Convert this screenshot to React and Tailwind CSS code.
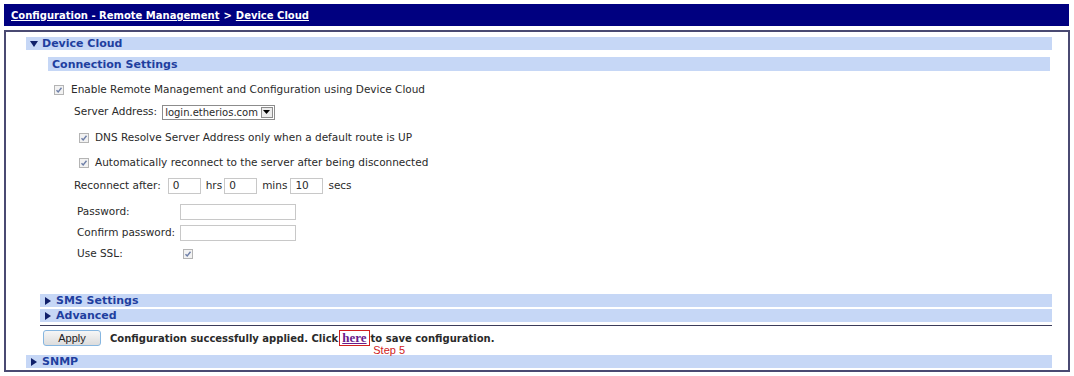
const Check = ({ className = "" }) => (
  <span
    className={`inline-flex items-center justify-center w-[10px] h-[10px] border border-[#b4b4b4] bg-[#f2f2f2] ${className}`}
  >
    <svg width="8" height="8" viewBox="0 0 8 8">
      <path d="M1.5 4.2 L3.2 6 L6.5 1.8" fill="none" stroke="#6e7fa8" strokeWidth="1.4" />
    </svg>
  </span>
);

const Bar = ({ arrow, label, className = "" }) => (
  <div
    className={`flex items-center h-[13px] bg-[#c6d7f6] text-[#1f3f9f] font-bold text-[11px] leading-none pl-[4px] whitespace-nowrap ${className}`}
  >
    {arrow === "down" && (
      <svg width="8" height="6" viewBox="0 0 8 6" className="mr-[4px]">
        <path d="M0 0 H8 L4 6 Z" fill="#10206a" />
      </svg>
    )}
    {arrow === "right" && (
      <svg width="6" height="8" viewBox="0 0 6 8" className="mr-[5px] ml-[1px]">
        <path d="M0 0 L6 4 L0 8 Z" fill="#10206a" />
      </svg>
    )}
    {label}
  </div>
);

const TextBox = ({ value = "", className = "" }) => (
  <span
    className={`inline-flex items-center h-[16px] border border-[#c8c8c8] bg-white px-[4px] text-[10.5px] ${className}`}
  >
    {value}
  </span>
);

export default function App() {
  return (
    <div
      className="w-[1074px] h-[376px] bg-white pt-[4px] pl-[4px] text-[#2a2a2a] text-[10.5px]"
      style={{ fontFamily: '"DejaVu Sans", Verdana, sans-serif' }}
    >
      {/* header */}
      <div className="w-[1065px] h-[22px] bg-[#000080] flex items-center pl-[7px] text-white font-bold text-[10px] whitespace-nowrap">
        <span className="underline">Configuration - Remote Management</span>
        <span className="mx-[4px]">&gt;</span>
        <span className="underline">Device Cloud</span>
      </div>

      {/* panel */}
      <div className="mt-[4px] w-[1066px] h-[342px] border-2 border-[#4a4a72] flex flex-col">
        <Bar arrow="down" label="Device Cloud" className="ml-[20px] mt-[5px] w-[1026px]" />
        <Bar label="Connection Settings" className="ml-[42px] mt-[7px] w-[1002px] h-[14px]" />

        <div className="ml-[48px] mt-[11px] h-[16px] flex items-center">
          <Check />
          <span className="ml-[7px]">Enable Remote Management and Configuration using Device Cloud</span>
        </div>

        <div className="ml-[68px] mt-[6px] h-[16px] flex items-center">
          <span>Server Address:</span>
          <span className="ml-[5px] inline-flex items-center h-[15px] border border-[#8c8c8c] bg-white pl-[2px] pr-[1px]">
            <span className="text-[10px]">login.etherios.com</span>
            <span className="ml-[3px] w-[12px] h-[11px] border border-[#8c8c8c] bg-[#ececec] flex items-center justify-center">
              <svg width="7" height="4" viewBox="0 0 7 4">
                <path d="M0 0 H7 L3.5 4 Z" fill="#000" />
              </svg>
            </span>
          </span>
        </div>

        <div className="ml-[73px] mt-[10px] h-[16px] flex items-center">
          <Check />
          <span className="ml-[6px]">DNS Resolve Server Address only when a default route is UP</span>
        </div>

        <div className="ml-[73px] mt-[9px] h-[16px] flex items-center">
          <Check />
          <span className="ml-[6px]">Automatically reconnect to the server after being disconnected</span>
        </div>

        <div className="ml-[68px] mt-[7px] h-[16px] flex items-center">
          <span>Reconnect after:</span>
          <TextBox value="0" className="ml-[7px] w-[33px]" />
          <span className="ml-[5px]">hrs</span>
          <TextBox value="0" className="ml-[2px] w-[33px]" />
          <span className="ml-[5px]">mins</span>
          <TextBox value="10" className="ml-[3px] w-[33px]" />
          <span className="ml-[5px]">secs</span>
        </div>

        <div className="ml-[71px] mt-[10px] grid grid-cols-[103px_116px] gap-y-[5px] items-center">
          <span>Password:</span>
          <TextBox />
          <span>Confirm password:</span>
          <TextBox />
          <span className="h-[16px] flex items-center">Use SSL:</span>
          <span className="pl-[3px] flex items-center">
            <Check />
          </span>
        </div>

        <Bar arrow="right" label="SMS Settings" className="ml-[34px] mt-[32px] w-[1012px]" />
        <Bar arrow="right" label="Advanced" className="ml-[34px] mt-[2px] w-[1012px]" />
        <div className="ml-[34px] mt-[3px] w-[1012px] h-px bg-[#3c3c5a]" />

        <div className="ml-[37px] mt-[4px] h-[16px] flex items-center whitespace-nowrap">
          <button
            className="w-[58px] h-[16px] rounded-[3px] border border-[#86b6e0] bg-gradient-to-b from-[#f6f6f6] to-[#dcdcdc] text-[11px] text-[#222] leading-none"
            style={{ fontFamily: '"Liberation Sans", Arial, sans-serif' }}
          >
            Apply
          </button>
          <span className="ml-[9px] font-bold text-[10px]">Configuration successfully applied. Click</span>
          <span className="relative ml-[1px] h-[16px] px-[2px] border border-[#d02020] flex items-center">
            <span
              className="underline font-bold text-[#6a1a8a] text-[13px]"
              style={{ fontFamily: '"Liberation Serif", "Times New Roman", serif' }}
            >
              here
            </span>
            <span
              className="absolute left-[33px] top-[14px] text-[11px] text-[#d02020] leading-none whitespace-nowrap"
              style={{ fontFamily: '"Liberation Sans", Arial, sans-serif' }}
            >
              Step 5
            </span>
          </span>
          <span className="ml-[1px] font-bold text-[10px]">to save configuration.</span>
        </div>

        <Bar arrow="right" label="SNMP" className="ml-[20px] mt-[9px] w-[1026px]" />
      </div>
    </div>
  );
}
